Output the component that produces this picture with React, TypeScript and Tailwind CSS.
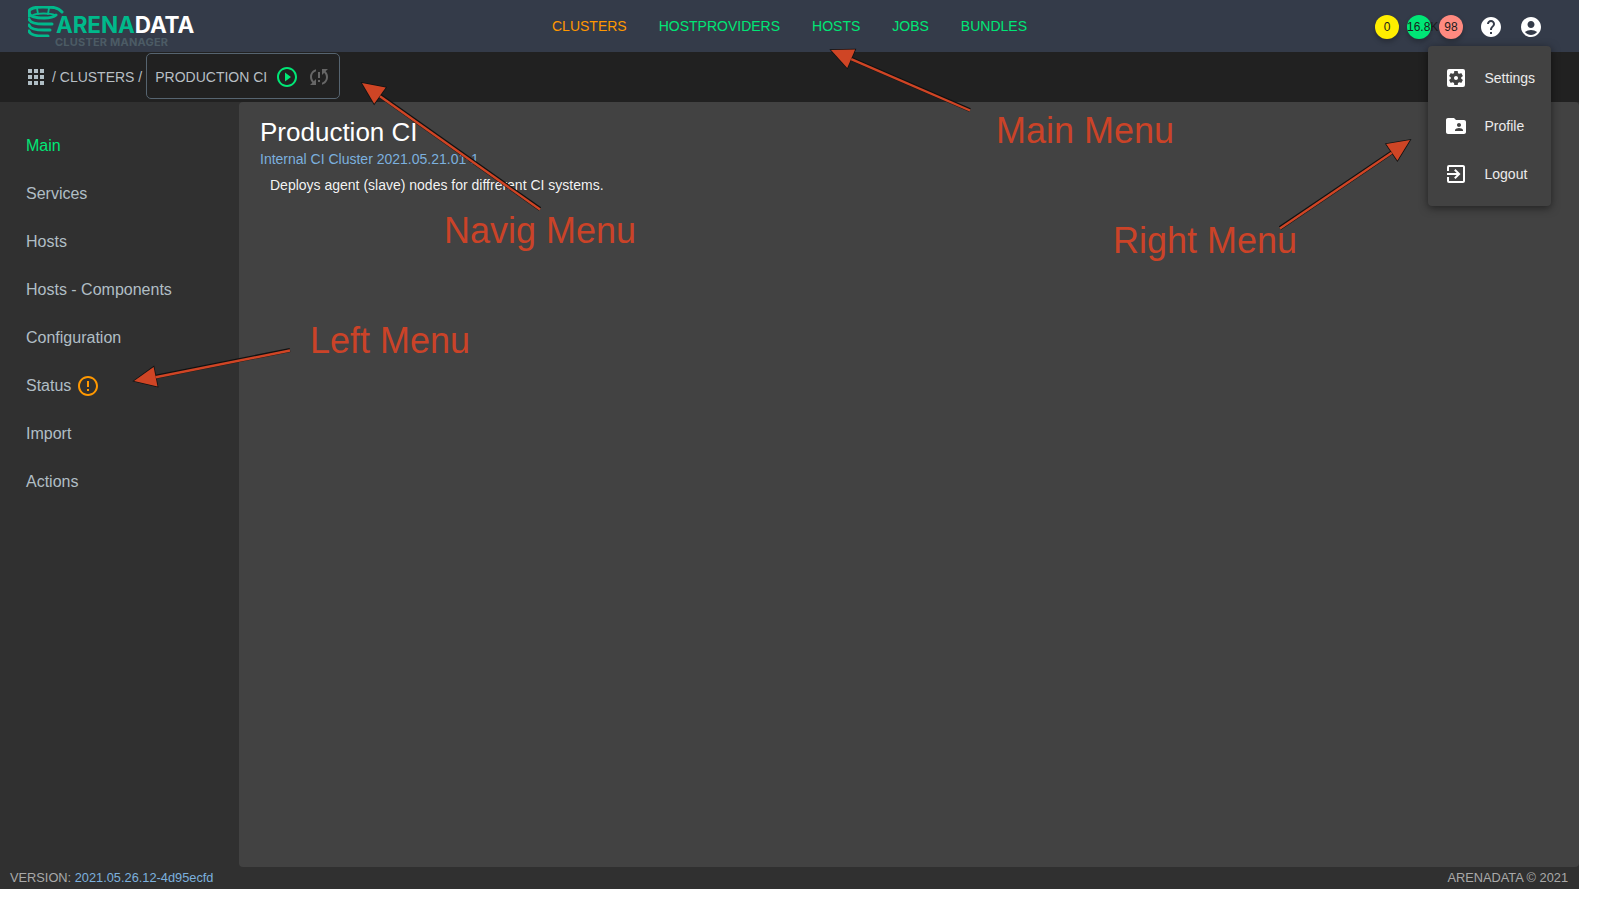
import React from "react";
import {
  MdApps,
  MdPlayCircleOutline,
  MdSyncProblem,
  MdHelp,
  MdAccountCircle,
  MdSettingsApplications,
  MdFolderShared,
  MdExitToApp,
  MdErrorOutline,
} from "react-icons/md";

const font = "font-['Liberation_Sans',Arial,sans-serif]";

function Logo() {
  return (
    <div className="relative w-[172px] h-[52px] shrink-0">
      <svg className="absolute left-0 top-[6px]" width="36" height="31" viewBox="0 0 36 31" fill="none" stroke="#00b98b" strokeWidth="3" strokeLinecap="round">
        <path d="M34 6 C30 1 24 1 15 1 C6 1 1 3 1 6 C1 10 7 12 16 12 C22 12 26 11 28 9" />
        <path d="M1 6 V10" />
        <path d="M9 2 L10 8 M21 2 L20 8" strokeWidth="1.8" />
        <path d="M5 9 C9 7 22 7 27 9" strokeWidth="1.8" />
        <path d="M1 13 C2 17 9 18 16 18 L24 18" />
        <path d="M1 19 C2 23 9 24 16 24 L22 24" />
        <path d="M1 25 C2 29 9 30 16 30 L20 30" />
      </svg>
      <div className="absolute left-[28px] top-[16px] text-[22.5px] leading-[18px] font-bold font-['Inter',sans-serif] tracking-[-0.1px] whitespace-nowrap">
        <span className="text-[#00b98b]">ARENA</span>
        <span className="text-white">DATA</span>
      </div>
      <div className="absolute left-[27px] top-[37px] text-[11px] leading-[11px] font-bold font-['Inter',sans-serif] text-[#4c5b65] tracking-[0.2px] whitespace-nowrap">
        CLUSTER MANAGER
      </div>
    </div>
  );
}

function Badge({ color, start, children }: { color: string; start?: boolean; children: React.ReactNode }) {
  return (
    <div className={`w-6 h-6 rounded-full flex items-center ${start ? "justify-start" : "justify-center"} text-[12px] text-[#1b1b1b] whitespace-nowrap shadow-[0_3px_5px_rgba(0,0,0,0.25)] ${color}`}>
      {children}
    </div>
  );
}

function MenuItem({ icon, label }: { icon: React.ReactNode; label: string }) {
  return (
    <div className="h-12 flex items-center pl-4 text-[14px] text-white/90">
      <span className="w-6 h-6 text-[#ffffff] text-[24px] mr-4 flex items-center justify-center">{icon}</span>
      <span className="ml-[0.5px]">{label}</span>
    </div>
  );
}

const mainNav = [
  { label: "CLUSTERS", cls: "text-[#ff9800]" },
  { label: "HOSTPROVIDERS", cls: "text-[#00e676]" },
  { label: "HOSTS", cls: "text-[#00e676]" },
  { label: "JOBS", cls: "text-[#00e676]" },
  { label: "BUNDLES", cls: "text-[#00e676]" },
];

const left = ["Main", "Services", "Hosts", "Hosts - Components", "Configuration", "Status", "Import", "Actions"];

function Arrow({ x1, y1, x2, y2 }: { x1: number; y1: number; x2: number; y2: number }) {
  const a = Math.atan2(y2 - y1, x2 - x1);
  const len = 22;
  const w = 10;
  const bx = x2 - Math.cos(a) * len;
  const by = y2 - Math.sin(a) * len;
  const px = -Math.sin(a) * w;
  const py = Math.cos(a) * w;
  const pts = `${x2},${y2} ${bx + px},${by + py} ${bx - px},${by - py}`;
  return (
    <g>
      <line x1={x1} y1={y1} x2={bx} y2={by} stroke="#111" strokeWidth="4" />
      <polygon points={pts} fill="#111" stroke="#111" strokeWidth="1.5" />
      <line x1={x1} y1={y1 + 0.5} x2={bx} y2={by + 0.5} stroke="#cf4525" strokeWidth="2.4" />
      <polygon points={pts} fill="#cf4525" />
    </g>
  );
}

function Note({ cls, children }: { cls: string; children: React.ReactNode }) {
  return <div className={`absolute text-[36px] leading-[42px] text-[#cb4328] whitespace-nowrap ${cls}`}>{children}</div>;
}

export default function App() {
  return (
    <div className={`relative w-[1579px] h-[889px] flex flex-col overflow-hidden ${font}`}>
      <header className="h-[52px] shrink-0 bg-[#343b49] flex items-center pl-[28px] pr-[36px]">
        <Logo />
        <nav className="flex gap-8 ml-[352px] text-[14px]">
          {mainNav.map((n) => (
            <span key={n.label} className={n.cls}>{n.label}</span>
          ))}
        </nav>
        <div className="ml-auto flex items-center mt-[2px]">
          <div className="flex gap-2 mr-4">
            <Badge color="bg-[#ffee00]">0</Badge>
            <Badge color="bg-[#00e676]" start>16.8K</Badge>
            <Badge color="bg-[#ff8a80]">98</Badge>
          </div>
          <MdHelp className="text-white text-[24px]" />
          <MdAccountCircle className="text-white text-[24px] ml-4" />
        </div>
      </header>

      <div className="h-[50px] shrink-0 bg-[#212121] flex items-center pl-[24px] text-[14px] text-[#b8bfc4]">
        <MdApps className="text-[#b0bec5] text-[24px]" />
        <span className="ml-1">/ CLUSTERS /</span>
        <div className="ml-[4px] w-[194px] h-[46px] -mt-[2px] pt-[2px] border border-[#566470] rounded-[5px] flex items-center pl-2">
          <span className="whitespace-nowrap">PRODUCTION CI</span>
          <MdPlayCircleOutline className="text-[#00e676] text-[24px] ml-2" />
          <MdSyncProblem className="text-[#666666] text-[24px] ml-2" />
        </div>
      </div>

      <div className="flex-1 flex min-h-0 bg-[#303030]">
        <aside className="w-[239px] shrink-0 pt-5">
          {left.map((l, i) => (
            <div key={l} className={`h-12 flex items-center pl-[26px] text-[16px] ${i === 0 ? "text-[#00e676]" : "text-[#b0bec5]"}`}>
              {l}
              {l === "Status" && <MdErrorOutline className="text-[#ff9800] text-[24px] ml-[5px]" />}
            </div>
          ))}
        </aside>
        <main className="flex-1 bg-[#424242] rounded-[4px] pl-[21px] pt-[15px] text-white">
          <h1 className="text-[26px] leading-[30px] font-normal">Production CI</h1>
          <div className="text-[14px] leading-[16px] mt-[4px] text-[#7cb0de]">Internal CI Cluster 2021.05.21.01-1</div>
          <p className="text-[14px] leading-[16px] mt-[10px] ml-[10px] text-white/95">Deploys agent (slave) nodes for diffrerent CI systems.</p>
        </main>
      </div>

      <footer className="h-[22px] shrink-0 bg-[#303030] flex items-center justify-between pl-[10px] pr-[11px] text-[12.8px] text-[#a9a9a9]">
        <div>
          VERSION: <span className="text-[#7cb0de]">2021.05.26.12-4d95ecfd</span>
        </div>
        <div>ARENADATA © 2021</div>
      </footer>

      <div className="absolute left-[1428px] top-[46px] w-[123px] h-[160px] py-2 bg-[#424242] rounded-[4px] shadow-[0_2px_8px_rgba(0,0,0,0.5)]">
        <MenuItem icon={<MdSettingsApplications />} label="Settings" />
        <MenuItem icon={<MdFolderShared />} label="Profile" />
        <MenuItem icon={<MdExitToApp />} label="Logout" />
      </div>

      <svg className="absolute left-0 top-0 pointer-events-none" width="1579" height="889">
        <Arrow x1={970} y1={110} x2={831} y2={50} />
        <Arrow x1={540} y1={209} x2={362} y2={83} />
        <Arrow x1={290} y1={350} x2={134} y2={381} />
        <Arrow x1={1280} y1={228} x2={1410} y2={140} />
      </svg>

      <Note cls="left-[996px] top-[110px]">Main Menu</Note>
      <Note cls="left-[444px] top-[210px]">Navig Menu</Note>
      <Note cls="left-[310px] top-[320px]">Left Menu</Note>
      <Note cls="left-[1113px] top-[220px]">Right Menu</Note>
    </div>
  );
}
